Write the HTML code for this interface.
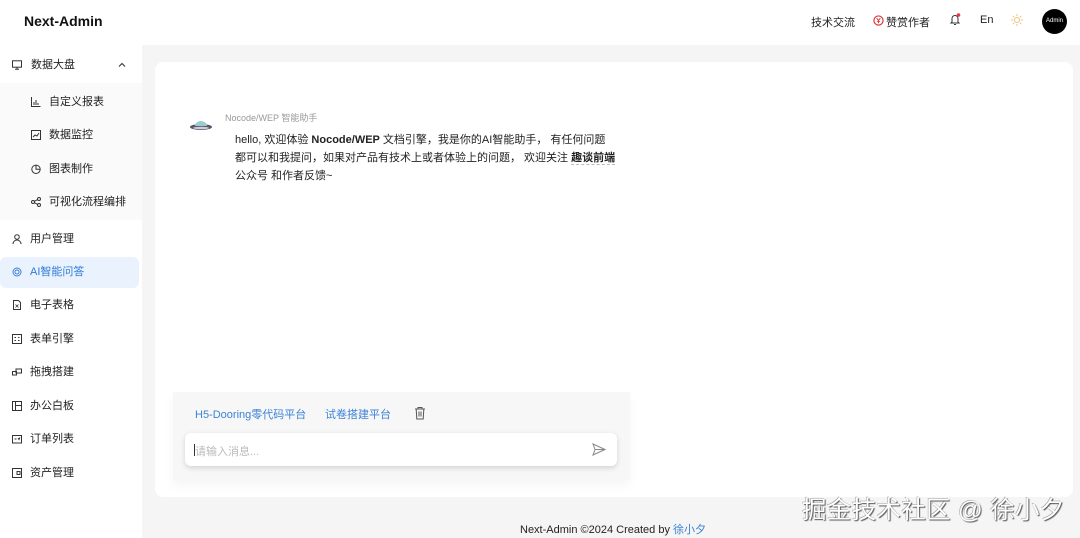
<!DOCTYPE html>
<html><head><meta charset="utf-8"><style>
*{margin:0;padding:0;box-sizing:border-box}
body{width:1080px;height:538px;overflow:hidden;background:#f5f5f5;font-family:"Liberation Sans","Noto Sans CJK SC",sans-serif;color:#222;position:relative}
.a{position:absolute}
.hdr{left:0;top:0;width:1080px;height:45px;background:#fff}
.side{left:0;top:45px;width:142px;height:493px;background:#fff}
.sub{left:0;top:83px;width:142px;height:137px;background:#fafafa}
.it{position:absolute;font-size:11px;color:#222;line-height:14px}
.ic{position:absolute;width:10px;height:10px}
.card{left:155px;top:62px;width:918px;height:435px;background:#fff;border-radius:8px}
</style></head><body>
<div class="a hdr"></div>
<div class="a" style="left:24px;top:13px;font-size:14px;font-weight:bold;color:#111">Next-Admin</div>
<div class="a" style="left:811px;top:14px;font-size:11px">技术交流</div>
<svg class="a" style="left:873px;top:15px" width="11" height="11" viewBox="0 0 12 12"><circle cx="6" cy="6" r="5" fill="none" stroke="#d33" stroke-width="1.3"/><path d="M4 3.5L6 6L8 3.5M6 6v3M4.5 7h3" stroke="#d33" fill="none" stroke-width="1"/></svg>
<div class="a" style="left:886px;top:14px;font-size:11px">赞赏作者</div>
<svg class="a" style="left:949px;top:13px" width="12" height="13" viewBox="0 0 12 13"><path d="M3 9V5.5a3 3 0 016 0V9l1 1H2z M5 11.5h2" fill="none" stroke="#333" stroke-width="1"/><circle cx="9.5" cy="2" r="1.8" fill="#e34"/></svg>
<div class="a" style="left:980px;top:14px;font-size:11px">En</div>
<svg class="a" style="left:1011px;top:14px" width="12" height="12" viewBox="0 0 12 12"><circle cx="6" cy="6" r="2.5" fill="none" stroke="#e8c27a"/><g stroke="#e8c27a"><path d="M6 0v2M6 10v2M0 6h2M10 6h2M1.8 1.8l1.4 1.4M8.8 8.8l1.4 1.4M1.8 10.2l1.4-1.4M8.8 3.2l1.4-1.4"/></g></svg>
<div class="a" style="left:1042px;top:9px;width:25px;height:25px;border-radius:50%;background:#000;color:#fff;font-size:6px;line-height:25px;text-align:center">Admin</div>

<div class="a side"></div>
<div class="a sub"></div>
<div class="a" style="left:0;top:257px;width:139px;height:31px;background:#eaf3fd;border-radius:6px"></div>

<svg class="ic" style="left:12px;top:60px" viewBox="0 0 10 10"><rect x="0.5" y="0.8" width="9" height="6.4" fill="none" stroke="#333"/><path d="M3 9.3h4M5 7.2v2" stroke="#333"/></svg>
<div class="it" style="left:31px;top:58px">数据大盘</div>
<svg class="a" style="left:118px;top:62px" width="8" height="6" viewBox="0 0 8 6"><path d="M1 4.5L4 1.5L7 4.5" fill="none" stroke="#333" stroke-width="1.1"/></svg>

<svg class="ic" style="left:31px;top:97px" viewBox="0 0 10 10"><path d="M.5 0v9.5h9M3 8V5M5 8V3M7 8V6" stroke="#333" fill="none"/></svg>
<div class="it" style="left:49px;top:95px">自定义报表</div>
<svg class="ic" style="left:31px;top:130px" viewBox="0 0 10 10"><rect x=".5" y=".5" width="9" height="9" fill="none" stroke="#333"/><path d="M2 7l2-2 2 1 2-3" stroke="#333" fill="none"/></svg>
<div class="it" style="left:49px;top:128px">数据监控</div>
<svg class="ic" style="left:31px;top:164px" viewBox="0 0 10 10"><circle cx="5" cy="5.3" r="4.2" fill="none" stroke="#333"/><path d="M5 1.1V5.3H9.2" stroke="#333" fill="none"/></svg>
<div class="it" style="left:49px;top:162px">图表制作</div>
<svg class="ic" style="left:31px;top:197px" viewBox="0 0 10 10"><circle cx="2" cy="5" r="1.5" fill="none" stroke="#333"/><circle cx="8" cy="2" r="1.5" fill="none" stroke="#333"/><circle cx="8" cy="8" r="1.5" fill="none" stroke="#333"/><path d="M3.4 4.3L6.6 2.6M3.4 5.7l3.2 1.7" stroke="#333"/></svg>
<div class="it" style="left:49px;top:195px">可视化流程编排</div>

<svg class="ic" style="left:12px;top:234px" viewBox="0 0 10 10"><circle cx="5" cy="3" r="2.3" fill="none" stroke="#333"/><path d="M1 10a4 4 0 018 0" fill="none" stroke="#333"/></svg>
<div class="it" style="left:30px;top:232px">用户管理</div>
<svg class="ic" style="left:12px;top:267px" viewBox="0 0 10 10"><circle cx="5" cy="5" r="4" fill="none" stroke="#3b82d6"/><circle cx="5" cy="5" r="2" fill="none" stroke="#3b82d6"/></svg>
<div class="it" style="left:30px;top:265px;color:#2f7bd8">AI智能问答</div>
<svg class="ic" style="left:12px;top:300px" viewBox="0 0 10 10"><path d="M1.5.5h5l2 2v7h-7z" fill="none" stroke="#333"/><path d="M3.5 4.5l3 3M6.5 4.5l-3 3" stroke="#333" stroke-width=".8"/></svg>
<div class="it" style="left:30px;top:298px">电子表格</div>
<svg class="ic" style="left:12px;top:334px" viewBox="0 0 10 10"><rect x=".5" y=".5" width="9" height="9" fill="none" stroke="#333"/><path d="M2.5 3.5h1.5M6 3.5h1.5M2.5 6.5h1.5M6 6.5h1.5" stroke="#333"/></svg>
<div class="it" style="left:30px;top:332px">表单引擎</div>
<svg class="ic" style="left:12px;top:367px" viewBox="0 0 10 10"><rect x="4" y="2" width="5.5" height="4" fill="none" stroke="#333"/><rect x=".5" y="4.5" width="4" height="3.5" fill="none" stroke="#333"/></svg>
<div class="it" style="left:30px;top:365px">拖拽搭建</div>
<svg class="ic" style="left:12px;top:401px" viewBox="0 0 10 10"><rect x=".5" y=".5" width="9" height="9" fill="none" stroke="#333"/><path d="M3.5 .5v9M3.5 4.5h6" stroke="#333"/></svg>
<div class="it" style="left:30px;top:399px">办公白板</div>
<svg class="ic" style="left:12px;top:434px" viewBox="0 0 10 10"><rect x=".5" y="1.5" width="9" height="7.5" fill="none" stroke="#333"/><path d="M2.5 5h2M6 4l1 1.5 1-2" stroke="#333" fill="none"/></svg>
<div class="it" style="left:30px;top:432px">订单列表</div>
<svg class="ic" style="left:12px;top:468px" viewBox="0 0 10 10"><rect x=".5" y=".5" width="9" height="9" fill="none" stroke="#333"/><rect x="5" y="3.5" width="3" height="3" fill="none" stroke="#333"/></svg>
<div class="it" style="left:30px;top:466px">资产管理</div>

<div class="a card"></div>
<svg class="a" style="left:189px;top:119px" width="24" height="14" viewBox="0 0 24 14"><ellipse cx="12" cy="8" rx="11" ry="3" fill="#556"/><path d="M6 7a6 5 0 0112 0z" fill="#9cc"/><ellipse cx="12" cy="9" rx="8" ry="1.2" fill="#ccd"/></svg>
<div class="a" style="left:225px;top:111px;font-size:9px;color:#999">Nocode/WEP 智能助手</div>
<div class="a" style="left:235px;top:131px;width:395px;font-size:11px;line-height:18px;color:#222"><div>hello, 欢迎体验 <b>Nocode/WEP</b> 文档引擎，我是你的AI智能助手， 有任何问题</div><div style="white-space:nowrap">都可以和我提问，如果对产品有技术上或者体验上的问题， 欢迎关注 <b style="border-bottom:1px dashed #bbb">趣谈前端</b></div><div>公众号 和作者反馈~</div></div>

<div class="a" style="left:173px;top:392px;width:457px;height:88px;background:#f7f7f7;box-shadow:0 6px 10px rgba(0,0,0,.04)"></div>
<div class="a" style="left:195px;top:406px;font-size:11px;color:#3b82d6">H5-Dooring零代码平台</div>
<div class="a" style="left:325px;top:406px;font-size:11px;color:#3b82d6">试卷搭建平台</div>
<svg class="a" style="left:414px;top:406px" width="12" height="14" viewBox="0 0 12 14"><path d="M1 3h10M4 3V1.5h4V3M2.2 3l.6 10h6.4l.6-10M5 5.5v5M7 5.5v5" fill="none" stroke="#555"/></svg>
<div class="a" style="left:185px;top:433px;width:432px;height:33px;background:#fff;border-radius:6px;box-shadow:0 2px 6px rgba(0,0,0,.15)"></div>
<div class="a" style="left:194px;top:444px;width:1px;height:12px;background:#333"></div>
<div class="a" style="left:195px;top:443px;font-size:11px;color:#bbb">请输入消息...</div>
<svg class="a" style="left:592px;top:443px" width="14" height="13" viewBox="0 0 14 13"><path d="M1 1l12 5.5L1 12l2-5.5z M3 6.5h10" fill="none" stroke="#888"/></svg>

<div class="a" style="left:520px;top:521px;font-size:11px;color:#222">Next-Admin ©2024 Created by <span style="color:#3b82d6">徐小夕</span></div>
<div class="a" style="left:802px;top:491px;font-size:24.5px;color:#fff;text-shadow:1px 1px 1px #555,-0.5px -0.5px 0 #999;letter-spacing:0.3px;white-space:nowrap">掘金技术社区 @ 徐小夕</div>
</body></html>
